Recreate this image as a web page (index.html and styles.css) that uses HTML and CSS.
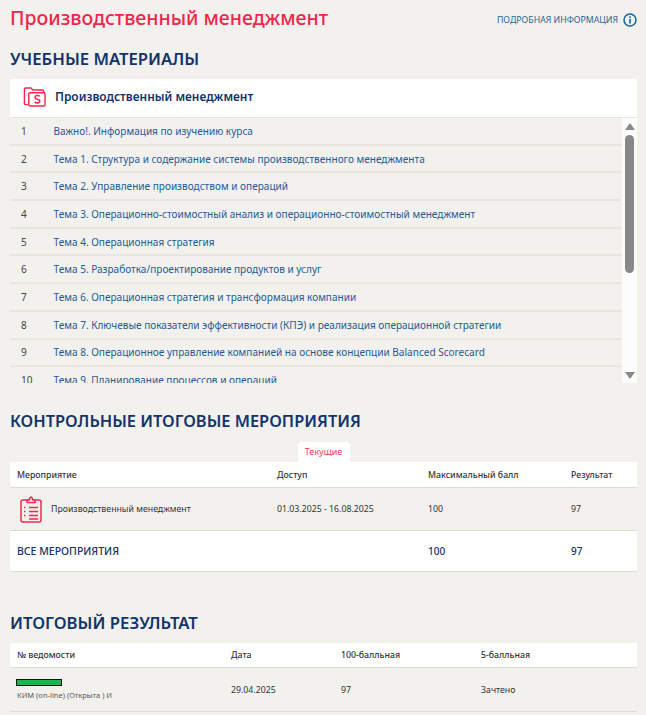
FILE: index.html
```html
<!DOCTYPE html>
<html lang="ru">
<head>
<meta charset="utf-8">
<title>Производственный менеджмент</title>
<link rel="stylesheet" href="styles.css">
</head>
<body>
<main class="page">
  <header class="top">
    <h1 class="title">Производственный менеджмент</h1>
    <a class="more">ПОДРОБНАЯ ИНФОРМАЦИЯ
      <svg class="info" viewBox="0 0 14 14" width="14" height="14"><circle cx="7" cy="7" r="6" fill="none" stroke="#15639f" stroke-width="1.5"/><rect x="6.2" y="6" width="1.6" height="4.6" fill="#15639f"/><rect x="6.2" y="3.3" width="1.6" height="1.6" fill="#15639f"/></svg>
    </a>
  </header>

  <h2 class="section first">УЧЕБНЫЕ МАТЕРИАЛЫ</h2>
  <section class="card">
    <div class="card-head">
      <svg class="folder" viewBox="0 0 24 24" width="23" height="23" fill="none" stroke="#f5284f" stroke-width="1.5" stroke-linejoin="round"><path d="M5 20.5H2.8q-1.3 0-1.3-1.3V4.5q0-1.3 1.3-1.3h5.5l2 2h10q1.3 0 1.3 1.3V8"/><rect x="6" y="8" width="17" height="14" rx="1.5"/><path d="M17.5 11.8q-.9-.9-2.6-.9-2.4 0-2.4 1.9 0 1.5 2.5 2 2.6.5 2.6 2.1 0 1.8-2.6 1.8-1.8 0-2.8-1"/></svg>
      <span class="card-title">Производственный менеджмент</span>
    </div>
    <div class="scroller">
      <ol class="topics">
        <li class="topic"><span class="num">1</span><a>Важно!. Информация по изучению курса</a></li>
        <li class="topic"><span class="num">2</span><a>Тема 1. Структура и содержание системы производственного менеджмента</a></li>
        <li class="topic"><span class="num">3</span><a>Тема 2. Управление производством и операций</a></li>
        <li class="topic"><span class="num">4</span><a>Тема 3. Операционно-стоимостный анализ и операционно-стоимостный менеджмент</a></li>
        <li class="topic"><span class="num">5</span><a>Тема 4. Операционная стратегия</a></li>
        <li class="topic"><span class="num">6</span><a>Тема 5. Разработка/проектирование продуктов и услуг</a></li>
        <li class="topic"><span class="num">7</span><a>Тема 6. Операционная стратегия и трансформация компании</a></li>
        <li class="topic"><span class="num">8</span><a>Тема 7. Ключевые показатели эффективности (КПЭ) и реализация операционной стратегии</a></li>
        <li class="topic"><span class="num">9</span><a>Тема 8. Операционное управление компанией на основе концепции Balanced Scorecard</a></li>
        <li class="topic"><span class="num">10</span><a>Тема 9. Планирование процессов и операций</a></li>
      </ol>
      <div class="bar">
        <span class="arrow up"></span>
        <span class="thumb"></span>
        <span class="arrow down"></span>
      </div>
    </div>
  </section>

  <h2 class="section second">КОНТРОЛЬНЫЕ ИТОГОВЫЕ МЕРОПРИЯТИЯ</h2>
  <div class="tabs"><span class="tab">Текущие</span></div>
  <div class="grid events head-row">
    <span>Мероприятие</span><span>Доступ</span><span>Максимальный балл</span><span>Результат</span>
  </div>
  <div class="grid events body-row">
    <span class="event-name">
      <svg class="clip" viewBox="0 0 22 27" width="22" height="27" fill="none" stroke="#f5284f" stroke-width="1.5" stroke-linejoin="round"><rect x="1" y="4" width="20" height="22" rx="2"/><path d="M7 6.5V4h2.5q.2-3 1.5-3t1.5 3H15v2.5z" fill="#f2f0ed"/><path d="M9 11.5h9M9 15.5h9M9 19.5h9M9 23h9" /><path d="M4 11.5h2M4 15.5h2M4 19.5h2" stroke-dasharray="1 .6"/></svg>
      Производственный менеджмент
    </span>
    <span>01.03.2025 - 16.08.2025</span><span>100</span><span>97</span>
  </div>
  <div class="grid events total-row">
    <span>ВСЕ МЕРОПРИЯТИЯ</span><span></span><span class="score">100</span><span class="score">97</span>
  </div>

  <h2 class="section third">ИТОГОВЫЙ РЕЗУЛЬТАТ</h2>
  <div class="grid results head-row">
    <span>№ ведомости</span><span>Дата</span><span>100-балльная</span><span>5-балльная</span>
  </div>
  <div class="grid results result-row">
    <span class="sheet"><i class="mark"></i><small>КИМ (on-line) (Открыта ) И</small></span>
    <span>29.04.2025</span><span>97</span><span>Зачтено</span>
  </div>
</main>
</body>
</html>
```
FILE: styles.css
```css
* { box-sizing: border-box; }
html, body { margin: 0; height: 715px; overflow: hidden; }
body { background: #f2f1ee; font-family: "Noto Sans", sans-serif; color: #333; }
.page { padding: 0 9px 0 10px; }
.top { display: flex; justify-content: space-between; align-items: center; height: 36px; }
.title { margin: -1px 0 0; font-size: 19.5px; font-weight: 500; color: #f0264c; line-height: 36px; }
.more { display: flex; align-items: center; gap: 5px; font-size: 8.75px; color: #2c6496; margin-top: 4px; }
.section { margin: 0; font-size: 16.7px; font-weight: 600; color: #12336b; line-height: 24px; }
.section.first { margin-top: 11px; }
.section.second { margin-top: 26px; font-size: 16.4px; }
.section.third { margin-top: 39px; }
.card-head { height: 38px; background: #fff; display: flex; align-items: center; padding: 0 0 4px 13px; gap: 9px; margin-top: 8px; }
.card-title { font-size: 11.9px; font-weight: 600; color: #12336b; }
.scroller { display: flex; height: 266px; overflow: hidden; border-top: 1px solid #e6e4df; }
.topics { flex: 1; list-style: none; margin: 0; padding: 0; }
.topic { display: flex; align-items: center; height: 27.7px; border-bottom: 2px solid #e8e6e1; font-size: 10.05px; }
.num { width: 43.5px; padding-left: 11px; color: #444; }
.topic a { color: #1f5a94; }
.bar { width: 15px; background: #fcfcfc; display: flex; flex-direction: column; align-items: center; padding-top: 5px; }
.arrow { width: 0; height: 0; border-left: 5px solid transparent; border-right: 5px solid transparent; }
.arrow.up { border-bottom: 7px solid #888; }
.arrow.down { border-top: 7px solid #888; margin-top: 99px; }
.thumb { width: 9px; height: 138px; margin-top: 5px; border-radius: 5px; background: #888; }
.tabs { display: flex; justify-content: center; margin-top: 9px; }
.tab { background: #fff; height: 20px; width: 52px; font-size: 9px; line-height: 20px; text-align: center; color: #f5405f; border-radius: 4px 4px 0 0; }
.grid { display: grid; align-items: center; font-size: 8.75px; padding-left: 7px; }
.events { grid-template-columns: 260px 151px 143px 1fr; }
.results { grid-template-columns: 214px 110px 140px 1fr; }
.head-row { height: 26px; background: #fff; border-bottom: 1px solid #dedcd7; font-weight: 500; }
.results.head-row { height: 25px; margin-top: 8px; }
.body-row { height: 43px; border-bottom: 1px solid #dedcd7; }
.event-name { display: flex; align-items: center; gap: 9px; padding-left: 3px; }
.total-row { height: 41px; background: #fff; border-bottom: 1px solid #dedcd7; font-size: 10.5px; font-weight: 500; color: #12336b; }
.score { font-size: 10px; }
.result-row { height: 44px; border-bottom: 1px solid #dedcd7; }
.sheet { display: flex; flex-direction: column; gap: 4px; }
.mark { display: block; width: 46px; height: 7px; background: #22b14c; border: 1px solid #111; margin-left: -1px; }
.sheet small { font-size: 7.5px; color: #555; }
```
